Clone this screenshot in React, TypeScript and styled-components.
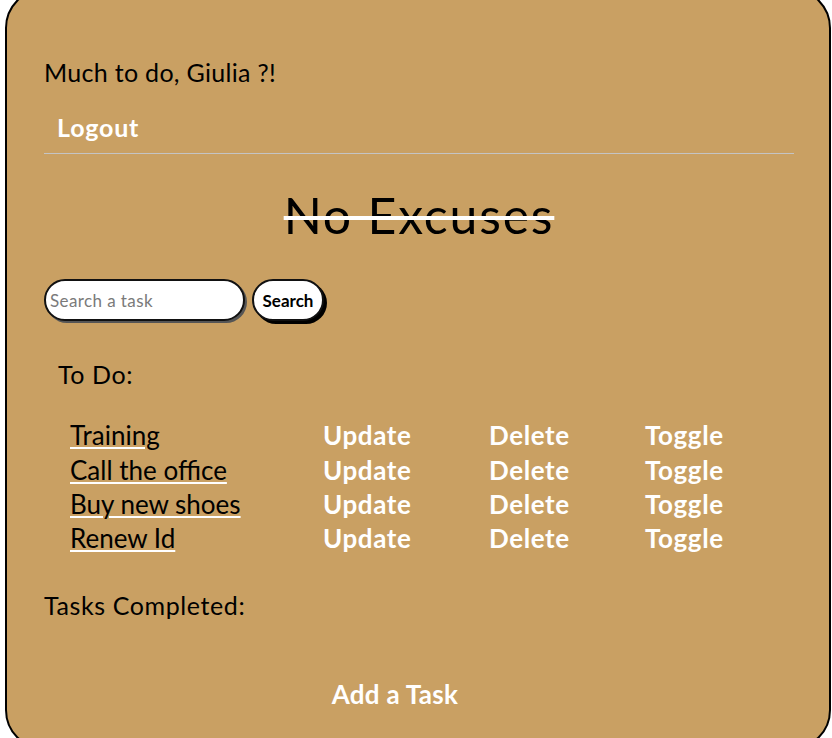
import React from "react";
import styled, { createGlobalStyle } from "styled-components";

const GlobalStyle = createGlobalStyle`
  html, body {
    margin: 0;
    padding: 0;
    background: #ffffff;
  }
  body {
    font-family: Lato, "Open Sans", "Noto Sans", sans-serif;
  }
  * { box-sizing: border-box; }
`;

const Card = styled.main`
  margin: -12px 0 0 5px;
  width: 826px;
  height: 762px;
  border: 2px solid #000;
  border-radius: 40px;
  background: #c9a063;
  padding: 0 35px 0 37px;
  display: flex;
  flex-direction: column;
  overflow: hidden;
`;

const Greeting = styled.h2`
  margin: 67px 0 0;
  font-size: 25px;
  font-weight: 400;
  line-height: 30px;
  letter-spacing: 0.3px;
  color: #000;
`;

const LogoutLink = styled.a`
  margin: 25px 0 0 13px;
  font-size: 25px;
  font-weight: 700;
  line-height: 30px;
  letter-spacing: 0.8px;
  color: #fff;
  text-decoration: none;
  cursor: pointer;
  align-self: flex-start;
`;

const Divider = styled.hr`
  margin: 11px 0 0;
  border: none;
  border-top: 1px solid #c4c4c4;
  height: 0;
`;

const Title = styled.h1`
  margin: 32px 0 0;
  font-size: 50px;
  font-weight: 400;
  line-height: 58px;
  letter-spacing: 1.8px;
  text-align: center;
  color: #000;
  text-decoration: line-through;
  text-decoration-color: #fff;
  text-decoration-thickness: 4px;
`;

const SearchForm = styled.form`
  margin-top: 35px;
  display: flex;
  align-items: center;
  gap: 7px;
`;

const SearchInput = styled.input`
  width: 201px;
  height: 42px;
  border: 2px solid #111;
  border-radius: 22px;
  box-shadow: 2px 2px 0 #555;
  background: #fff;
  padding: 0 4px;
  font-family: inherit;
  font-size: 17px;
  letter-spacing: 0.4px;
  color: #000;
  outline: none;
  &::placeholder {
    color: #7a7a7a;
  }
`;

const SearchButton = styled.button`
  width: 72px;
  height: 42px;
  padding: 0;
  border: 2px solid #111;
  border-radius: 22px;
  box-shadow: 3px 3px 0 #000;
  background: #fff;
  font-family: inherit;
  font-size: 17px;
  font-weight: 700;
  color: #000;
  cursor: pointer;
`;

const SectionLabel = styled.h3<{ $indent?: number; $mt: number }>`
  margin: ${(p) => p.$mt}px 0 0 ${(p) => p.$indent ?? 0}px;
  font-size: 25px;
  font-weight: 400;
  line-height: 30px;
  letter-spacing: 0.6px;
  color: #000;
`;

const TaskList = styled.ul`
  list-style: none;
  margin: 29px 0 0 26px;
  padding: 0;
  display: flex;
  flex-direction: column;
`;

const TaskRow = styled.li`
  display: grid;
  grid-template-columns: 253px 166px 156px auto;
  height: 34.4px;
  align-items: center;
  font-size: 26px;
  line-height: 34px;
`;

const TaskName = styled.span`
  justify-self: start;
  color: #000;
  text-decoration: underline;
  text-decoration-color: #fff;
  text-decoration-thickness: 2px;
  text-underline-offset: 2px;
`;

const ActionLink = styled.a`
  justify-self: start;
  color: #fff;
  font-weight: 700;
  letter-spacing: 0.6px;
  cursor: pointer;
`;

const AddTask = styled.a`
  margin: 57px 0 0 -48px;
  align-self: center;
  font-size: 26px;
  font-weight: 700;
  line-height: 34px;
  letter-spacing: 0.3px;
  color: #fff;
  cursor: pointer;
`;

const tasks = ["Training", "Call the office", "Buy new shoes", "Renew Id"];

export default function App() {
  return (
    <>
      <GlobalStyle />
      <Card>
        <Greeting>Much to do, Giulia ?!</Greeting>
        <LogoutLink>Logout</LogoutLink>
        <Divider />
        <Title>No Excuses</Title>
        <SearchForm onSubmit={(e) => e.preventDefault()}>
          <SearchInput placeholder="Search a task" />
          <SearchButton type="submit">Search</SearchButton>
        </SearchForm>
        <SectionLabel $indent={14} $mt={38}>To Do:</SectionLabel>
        <TaskList>
          {tasks.map((t) => (
            <TaskRow key={t}>
              <TaskName>{t}</TaskName>
              <ActionLink>Update</ActionLink>
              <ActionLink>Delete</ActionLink>
              <ActionLink>Toggle</ActionLink>
            </TaskRow>
          ))}
        </TaskList>
        <SectionLabel $mt={34}>Tasks Completed:</SectionLabel>
        <AddTask>Add a Task</AddTask>
      </Card>
    </>
  );
}
